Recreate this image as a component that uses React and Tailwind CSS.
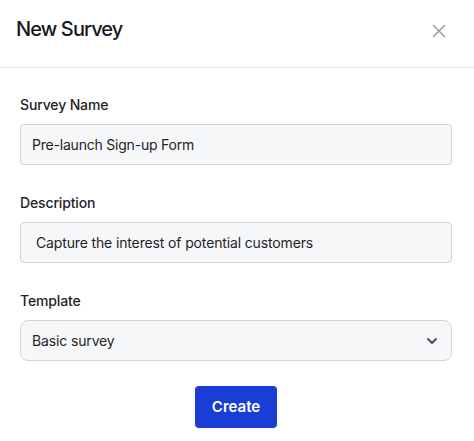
import React from "react";

const font = { fontFamily: 'Inter, "Liberation Sans", Arial, sans-serif' };

function Field({ label, children, first }) {
    return (
        <div className={first ? "" : "mt-[28px]"}>
            <div className="text-sm leading-5 font-medium tracking-[-0.01em] text-[#1f2328]">{label}</div>
            <div className="mt-[9px]">{children}</div>
        </div>
    );
}

export default function App() {
    return (
        <div style={font} className="w-[474px] h-[441px] bg-white">
            {/* header */}
            <div className="h-[68px] flex items-start justify-between pl-4 pr-[28px] pt-[15px] border-b border-[#e3e5e8]">
                <h1 className="text-[20px] leading-7 font-medium tracking-[-0.045em] text-[#15181d]">New Survey</h1>
                <button className="mt-[9px] text-[#9aa0a9]">
                    <svg width="14" height="14" viewBox="0 0 14 14" fill="none" stroke="currentColor" strokeWidth="1.6" strokeLinecap="round">
                        <path d="M1.5 1.5 L12.5 12.5 M12.5 1.5 L1.5 12.5" />
                    </svg>
                </button>
            </div>

            {/* form */}
            <div className="pl-5 pr-[22px] pt-[27px]">
                <Field label="Survey Name" first>
                    <div className="h-[41px] flex items-center pl-[11px] bg-[#f6f7f9] border border-[#d0d4da] rounded-[4px] text-sm tracking-[-0.015em] text-[#1f2328]">
                        Pre-launch Sign-up Form
                    </div>
                </Field>
                <Field label="Description">
                    <div className="h-[41px] flex items-center pl-[15px] bg-[#f6f7f9] border border-[#d0d4da] rounded-[4px] text-sm tracking-[-0.01em] text-[#1f2328]">
                        Capture the interest of potential customers
                    </div>
                </Field>
                <Field label="Template">
                    <div className="h-[41px] flex items-center justify-between pl-[11px] pr-[13px] bg-[#f6f7f9] border border-[#d0d4da] rounded-[8px] text-sm tracking-[-0.01em] text-[#1f2328]">
                        <span>Basic survey</span>
                        <svg width="12" height="8" viewBox="0 0 12 8" fill="none" stroke="#4b5260" strokeWidth="2" strokeLinecap="round" strokeLinejoin="round">
                            <path d="M2 2 L6 6 L10 2" />
                        </svg>
                    </div>
                </Field>
                <div className="flex justify-center mt-[25px]">
                    <button className="w-[82px] h-[42px] rounded-[4px] bg-[#1a3dd6] text-white text-[15px] font-semibold">
                        Create
                    </button>
                </div>
            </div>
        </div>
    );
}
